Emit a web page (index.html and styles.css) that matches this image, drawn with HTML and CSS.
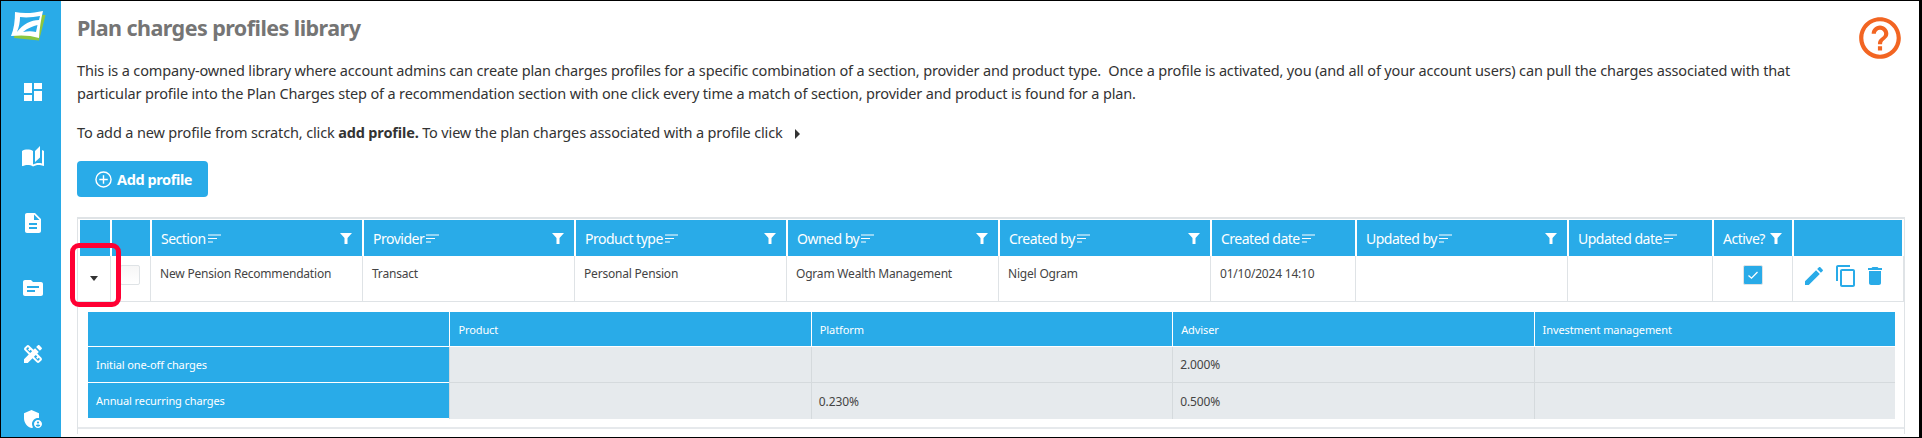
FILE: index.html
```html
<!DOCTYPE html>
<html lang="en">
<head>
<meta charset="utf-8">
<title>Plan charges profiles library</title>
<link rel="stylesheet" href="styles.css">
</head>
<body>
<div class="frame">
  <nav class="rail">
    <svg class="logo" width="36" height="36" viewBox="0 0 36 36"><path d="M8 6 35.600 7 29 32.600 4 30Z" fill="#8cc63f"/><path d="M5 4C14 6 24 5 33 3 31 11 29.500 21 29 30 20 27 10 27 1 28 4 21 5 12 5 4Z" fill="#fff"/><path d="M10 9C17 10 24 9 30 8L29 12C21 12 13 16 7 24 9 19 10 14 10 9Z" fill="#29abe8"/><path d="M13 24C18 20 23 18 27.500 17L26 24C22 23 18 23 13 24Z" fill="#29abe8"/></svg>
    <svg class="ico" width="24" height="24" viewBox="0 0 24 24"><path fill="#fff" d="M3 13h8V3H3v10zm0 8h8v-6H3v6zm10 0h8V11h-8v10zm0-18v6h8V3h-8z"/></svg>
    <svg class="ico" width="24" height="24" viewBox="0 0 24 24"><path fill="#fff" d="M19 1l-5 5v11l5-4.500V1zM1 6v14.650c0 .25.25.5.5.5.1 0 .15-.05.25-.05C3.100 20.450 5.050 20 6.500 20c1.950 0 4.050.4 5.500 1.500V6c-1.450-1.100-3.550-1.500-5.500-1.500S2.450 4.900 1 6zm22 13.500V6c-.6-.45-1.250-.75-2-1v13.500c-1.100-.35-2.300-.5-3.500-.5-1.700 0-4.150.65-5.500 1.500v2c1.350-.85 3.800-1.500 5.500-1.500 1.650 0 3.350.3 4.750 1.050.1.05.15.05.25.05.25 0 .5-.25.5-.5v-1.100z"/></svg>
    <svg class="ico" width="24" height="24" viewBox="0 0 24 24"><path fill="#fff" d="M14 2H6c-1.100 0-1.990.9-1.990 2L4 20c0 1.100.89 2 1.990 2H18c1.100 0 2-.9 2-2V8l-6-6zm2 16H8v-2h8v2zm0-4H8v-2h8v2zm-3-5V3.500L18.500 9H13z"/></svg>
    <svg class="ico" width="24" height="24" viewBox="0 0 24 24"><path fill="#fff" d="M20 6h-8l-2-2H4c-1.100 0-1.990.9-1.990 2L2 18c0 1.100.9 2 2 2h16c1.100 0 2-.9 2-2V8c0-1.100-.9-2-2-2zm-6 10H6v-2h8v2zm4-4H6v-2h12v2z"/></svg>
    <svg class="ico" width="24" height="24" viewBox="0 0 24 24"><path fill="#fff" d="M16.240 11.510l1.570-1.570-3.750-3.750-1.570 1.570-4.140-4.130c-.78-.78-2.050-.78-2.830 0l-1.900 1.900c-.78.78-.78 2.050 0 2.830l4.130 4.130L3 17.250V21h3.750l4.760-4.760 4.130 4.130c.95.95 2.230.6 2.830 0l1.900-1.900c.78-.78.78-2.050 0-2.830l-4.130-4.130zm-7.060-.44L5.040 6.940l1.890-1.900L8.200 6.310 7.020 7.500l1.410 1.410 1.190-1.190 1.450 1.450-1.890 1.900zm7.880 7.890l-4.130-4.130 1.900-1.900 1.450 1.450-1.190 1.190 1.410 1.410 1.190-1.190 1.270 1.270-1.900 1.900zM20.710 7.040c.39-.39.39-1.020 0-1.410l-2.340-2.340c-.47-.47-1.120-.29-1.410 0l-1.830 1.830 3.750 3.750 1.830-1.830z"/></svg>
    <svg class="ico" width="24" height="24" viewBox="0 0 24 24"><path fill="#fff" d="M17 11c.34 0 .67.04 1 .09V6.270L10.500 3 3 6.270v4.910c0 4.540 3.200 8.790 7.500 9.820.55-.13 1.080-.32 1.600-.55-.69-.98-1.100-2.170-1.100-3.450 0-3.310 2.690-6 6-6z"/><path fill="#fff" d="M17 13c-2.210 0-4 1.790-4 4s1.790 4 4 4 4-1.790 4-4-1.790-4-4-4zm0 1.380c.62 0 1.120.51 1.120 1.120s-.51 1.120-1.120 1.120-1.120-.51-1.120-1.120.5-1.120 1.120-1.120zm0 5.370c-.93 0-1.740-.46-2.240-1.170.05-.72 1.510-1.080 2.240-1.080s2.190.36 2.240 1.080c-.5.71-1.310 1.170-2.240 1.170z"/></svg>
  </nav>
  <main class="content">
    <svg class="help" width="50" height="50" viewBox="0 0 24 24"><path fill="#f26522" d="M11 18h2v-2h-2v2zm1-16C6.480 2 2 6.480 2 12s4.480 10 10 10 10-4.480 10-10S17.520 2 12 2zm0 18c-4.410 0-8-3.590-8-8s3.590-8 8-8 8 3.590 8 8-3.590 8-8 8zm0-14c-2.210 0-4 1.790-4 4h2c0-1.100.9-2 2-2s2 .9 2 2c0 2-3 1.750-3 5h2c0-2.250 3-2.500 3-5 0-2.210-1.790-4-4-4z"/></svg>
    <h1 class="title">Plan charges profiles library</h1>
    <p class="intro">This is a company-owned library where account admins can create plan charges profiles for a specific combination of a section, provider and product type.&nbsp; Once a profile is activated, you (and all of your account users) can pull the charges associated with that particular profile into the Plan Charges step of a recommendation section with one click every time a match of section, provider and product is found for a plan.</p>
    <p class="intro second">To add a new profile from scratch, click <b>add profile.</b> To view the plan charges associated with a profile click <span class="tri"></span></p>
    <button class="add" type="button">
      <svg width="17" height="17" viewBox="0 0 18 18"><circle cx="9" cy="9" r="8" fill="none" stroke="#fff" stroke-width="1.500"/><path d="M9 4.500v9M4.500 9h9" stroke="#fff" stroke-width="1.500"/></svg>
      Add profile
    </button>
    <div class="table-box">
      <table class="grid">
        <colgroup>
          <col class="c-exp"><col class="c-chk"><col class="c-wide"><col class="c-wide"><col class="c-wide"><col class="c-wide"><col class="c-wide"><col class="c-date"><col class="c-wide"><col class="c-date"><col class="c-act"><col class="c-ops">
        </colgroup>
        <thead>
          <tr>
            <th></th><th></th>
            <th><div class="th"><span>Section</span><svg class="sort" width="13" height="9" viewBox="0 0 13 9"><path d="M0 1h13M0 4.500h9M0 8h5" stroke="#fff" stroke-width="1.200"/></svg><svg class="funnel" width="12" height="11" viewBox="0 0 12 11"><path d="M0 0h12L7.500 5v6h-3V5z" fill="#fff"/></svg></div></th>
            <th><div class="th"><span>Provider</span><svg class="sort" width="13" height="9" viewBox="0 0 13 9"><path d="M0 1h13M0 4.500h9M0 8h5" stroke="#fff" stroke-width="1.200"/></svg><svg class="funnel" width="12" height="11" viewBox="0 0 12 11"><path d="M0 0h12L7.500 5v6h-3V5z" fill="#fff"/></svg></div></th>
            <th><div class="th"><span>Product type</span><svg class="sort" width="13" height="9" viewBox="0 0 13 9"><path d="M0 1h13M0 4.500h9M0 8h5" stroke="#fff" stroke-width="1.200"/></svg><svg class="funnel" width="12" height="11" viewBox="0 0 12 11"><path d="M0 0h12L7.500 5v6h-3V5z" fill="#fff"/></svg></div></th>
            <th><div class="th"><span>Owned by</span><svg class="sort" width="13" height="9" viewBox="0 0 13 9"><path d="M0 1h13M0 4.500h9M0 8h5" stroke="#fff" stroke-width="1.200"/></svg><svg class="funnel" width="12" height="11" viewBox="0 0 12 11"><path d="M0 0h12L7.500 5v6h-3V5z" fill="#fff"/></svg></div></th>
            <th><div class="th"><span>Created by</span><svg class="sort" width="13" height="9" viewBox="0 0 13 9"><path d="M0 1h13M0 4.500h9M0 8h5" stroke="#fff" stroke-width="1.200"/></svg><svg class="funnel" width="12" height="11" viewBox="0 0 12 11"><path d="M0 0h12L7.500 5v6h-3V5z" fill="#fff"/></svg></div></th>
            <th><div class="th"><span>Created date</span><svg class="sort" width="13" height="9" viewBox="0 0 13 9"><path d="M0 1h13M0 4.500h9M0 8h5" stroke="#fff" stroke-width="1.200"/></svg></div></th>
            <th><div class="th"><span>Updated by</span><svg class="sort" width="13" height="9" viewBox="0 0 13 9"><path d="M0 1h13M0 4.500h9M0 8h5" stroke="#fff" stroke-width="1.200"/></svg><svg class="funnel" width="12" height="11" viewBox="0 0 12 11"><path d="M0 0h12L7.500 5v6h-3V5z" fill="#fff"/></svg></div></th>
            <th><div class="th"><span>Updated date</span><svg class="sort" width="13" height="9" viewBox="0 0 13 9"><path d="M0 1h13M0 4.500h9M0 8h5" stroke="#fff" stroke-width="1.200"/></svg></div></th>
            <th><div class="th"><span>Active?</span><svg class="funnel" width="12" height="11" viewBox="0 0 12 11"><path d="M0 0h12L7.500 5v6h-3V5z" fill="#fff"/></svg></div></th>
            <th></th>
          </tr>
        </thead>
        <tbody>
          <tr>
            <td class="exp"><span class="caret"></span></td>
            <td class="chk"><span class="box"></span></td>
            <td>New Pension Recommendation</td>
            <td>Transact</td>
            <td>Personal Pension</td>
            <td>Ogram Wealth Management</td>
            <td>Nigel Ogram</td>
            <td>01/10/2024 14:10</td>
            <td></td>
            <td></td>
            <td class="act"><span class="tick"><svg width="14" height="14" viewBox="0 0 14 14"><path d="M2.500 7.500 5.500 10.200 11.500 4" fill="none" stroke="#fff" stroke-width="1.300"/></svg></span></td>
            <td class="ops">
              <svg width="24" height="24" viewBox="0 0 24 24"><path fill="#29abe8" d="M3 17.250V21h3.750L17.810 9.940l-3.750-3.750L3 17.250zM20.710 7.040c.39-.39.39-1.020 0-1.410l-2.340-2.340c-.39-.39-1.020-.39-1.410 0l-1.830 1.830 3.750 3.750 1.830-1.830z"/></svg>
              <svg class="copy" width="24" height="24" viewBox="0 0 24 24"><path fill="#29abe8" d="M16 1H4c-1.100 0-2 .9-2 2v14h2V3h12V1zm3 4H8c-1.100 0-2 .9-2 2v14c0 1.100.9 2 2 2h11c1.100 0 2-.9 2-2V7c0-1.100-.9-2-2-2zm0 16H8V7h11v14z"/></svg>
              <svg class="trash" width="24" height="24" viewBox="0 0 24 24"><path fill="#29abe8" d="M6 19c0 1.100.9 2 2 2h8c1.100 0 2-.9 2-2V7H6v12zM19 4h-3.500l-1-1h-5l-1 1H5v2h14V4z"/></svg>
            </td>
          </tr>
        </tbody>
      </table>
      <div class="detail">
        <table class="charges">
          <colgroup><col class="d-col"><col class="d-col"><col class="d-col"><col class="d-col"><col class="d-col"></colgroup>
          <thead>
            <tr><th></th><th>Product</th><th>Platform</th><th>Adviser</th><th>Investment management</th></tr>
          </thead>
          <tbody>
            <tr><th>Initial one-off charges</th><td></td><td></td><td>2.000%</td><td></td></tr>
            <tr><th>Annual recurring charges</th><td></td><td>0.230%</td><td>0.500%</td><td></td></tr>
          </tbody>
        </table>
      </div>
      <div class="rule"></div>
    </div>
    <div class="marker"></div>
  </main>
</div>
</body>
</html>
```

FILE: styles.css
```css
* { box-sizing: border-box; }
html, body { margin: 0; padding: 0; background: #fff; }
body { width: 1922px; height: 438px; overflow: hidden; font-family: "Noto Sans", "Open Sans", sans-serif; color: #333; }
.frame { width: 1922px; height: 438px; border: solid #000; border-width: 1px 3px 1px 1px; display: flex; overflow: hidden; }
.rail { width: 60px; flex: none; background: #29abe8; display: flex; flex-direction: column; align-items: flex-start; padding: 7px 0 0 20px; height: 100%; }
.logo { display: block; flex: none; margin-left: -11px; }
.ico { display: block; flex: none; margin-top: 41.400px; }
.logo + .ico { margin-top: 36px; }
.content { flex: 1; position: relative; padding: 13px 0 0 16px; min-width: 0; }
.help { position: absolute; right: 14px; top: 12px; }
.title { margin: 0; font-size: 21.500px; line-height: 28px; font-weight: 700; color: #757575; letter-spacing: -.55px; }
.intro { margin: 17px 0 0; width: 1760px; font-size: 14.500px; line-height: 23px; color: #333; letter-spacing: -.15px; }
.intro.second { margin-top: 16px; }
.intro b { font-weight: 700; }
.tri { display: inline-block; margin-left: 9px; border-left: 5px solid #333; border-top: 5px solid transparent; border-bottom: 5px solid transparent; vertical-align: -1px; }
.add { display: flex; align-items: center; gap: 5px; margin-top: 17px; width: 131px; height: 36px; padding: 0 0 0 18px; background: #29abe8; color: #fff; border: 0; border-radius: 4px; font: 700 14.500px "Noto Sans", sans-serif; letter-spacing: -.4px; }
.table-box { margin-top: 20px; width: 1828px; height: 217px; border: solid #dfe3e6; border-width: 2px 1px 0; }
.grid { border-collapse: separate; border-spacing: 0; table-layout: fixed; width: 1826px; }
.c-exp { width: 32px; } .c-chk { width: 40px; } .c-wide { width: 212px; } .c-date { width: 145px; } .c-act { width: 80px; } .c-ops { width: 112px; }
.grid th { background: #29abe8; color: #fff; height: 37px; padding: 0 0 0 9px; font-weight: 400; font-size: 14px; letter-spacing: -.5px; text-align: left; border-left: 2px solid #fff; border-top: 1px solid #fff; }
.grid th:last-child { border-right: 2px solid #fff; }
.th { display: flex; align-items: center; }
.th .sort { margin-left: 2px; flex: none; }
.th .funnel { margin-left: auto; margin-right: 10px; flex: none; }
.grid td { height: 46px; vertical-align: top; padding: 9px 0 0 9px; font-size: 12px; line-height: 18px; letter-spacing: -.2px; color: #444; border-left: 1px solid #dfe3e6; border-bottom: 1px solid #dfe3e6; }
.grid td:first-child { border-left: 0; }
.grid td:last-child { border-right: 1px solid #dfe3e6; }
.grid td.exp { padding: 20px 0 0 12px; }
.caret { display: block; width: 0; height: 0; border-top: 5px solid #333; border-left: 4.500px solid transparent; border-right: 4.500px solid transparent; }
.grid td.chk { padding: 9px 0 0 9px; }
.box { display: block; width: 20px; height: 20px; border: 1px solid #dfe3e6; border-radius: 2px; background: linear-gradient(#f6f6f6, #fff); }
.grid td.act { padding: 9px 0 0 30px; }
.tick { display: flex; align-items: center; justify-content: center; width: 20px; height: 20px; background: #29abe8; border: 1px solid #dfe3e6; border-radius: 2px; }
.grid td.ops { padding: 8px 0 0 9px; white-space: nowrap; font-size: 0; }
.ops svg { display: inline-block; vertical-align: top; }
.ops .copy { margin-left: 8px; }
.ops .trash { margin-left: 5px; }
.detail { padding: 10px 0 0 10px; }
.charges { border-collapse: separate; border-spacing: 0; table-layout: fixed; width: 1807px; }
.d-col { width: 361.400px; }
.charges th { background: #29abe8; color: #fff; font-weight: 400; font-size: 11px; text-align: left; padding: 0 0 0 8px; letter-spacing: -.1px; border-bottom: 1px solid #fff; height: 36px; }
.charges thead th { height: 35px; border-left: 1px solid #fff; }
.charges thead th:first-child { border-left: 0; }
.charges td { height: 36px; background: #e6eaed; font-size: 12px; letter-spacing: -.1px; color: #444; padding: 0 0 0 7px; border-left: 1px solid #d5dadd; border-bottom: 1px solid #d5dadd; }
.charges tbody tr:last-child td { border-bottom: 0; }
.rule { height: 2px; background: #e6e9ec; margin-top: 8px; }
.marker { position: absolute; left: 9px; top: 242px; width: 51px; height: 64px; border: 5px solid #ff0033; border-radius: 9px; pointer-events: none; }
```
